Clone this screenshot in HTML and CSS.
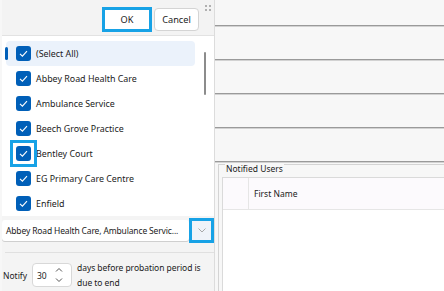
FILE: index.html
```html
<!DOCTYPE html>
<html lang="en">
<head>
  <meta charset="UTF-8">
  <title>Probation Notifications</title>
  <link rel="stylesheet" href="styles.css">
</head>
<body>
<div class="screen">
  <div class="filter-panel">
    <div class="popup-bar">
      <button class="btn btn-ok">OK</button>
      <button class="btn">Cancel</button>
      <svg class="grip" width="8" height="7" viewBox="0 0 8 7">
        <rect x="0" y="0" width="2" height="2" fill="#b0b0b0"/>
        <rect x="4" y="0" width="2" height="2" fill="#b0b0b0"/>
        <rect x="0" y="4" width="2" height="2" fill="#b0b0b0"/>
        <rect x="4" y="4" width="2" height="2" fill="#b0b0b0"/>
      </svg>
    </div>

    <div class="checklist">
      <ul class="items">
        <li class="item selected"><span class="check"><svg viewBox="0 0 15 15"><path d="M4 7.8 L6.4 10.1 L11 5.2"/></svg></span>(Select All)</li>
        <li class="item"><span class="check"><svg viewBox="0 0 15 15"><path d="M4 7.8 L6.4 10.1 L11 5.2"/></svg></span>Abbey Road Health Care</li>
        <li class="item"><span class="check"><svg viewBox="0 0 15 15"><path d="M4 7.8 L6.4 10.1 L11 5.2"/></svg></span>Ambulance Service</li>
        <li class="item"><span class="check"><svg viewBox="0 0 15 15"><path d="M4 7.8 L6.4 10.1 L11 5.2"/></svg></span>Beech Grove Practice</li>
        <li class="item"><span class="check focused"><svg viewBox="0 0 15 15"><path d="M4 7.8 L6.4 10.1 L11 5.2"/></svg></span>Bentley Court</li>
        <li class="item"><span class="check"><svg viewBox="0 0 15 15"><path d="M4 7.8 L6.4 10.1 L11 5.2"/></svg></span>EG Primary Care Centre</li>
        <li class="item"><span class="check"><svg viewBox="0 0 15 15"><path d="M4 7.8 L6.4 10.1 L11 5.2"/></svg></span>Enfield</li>
      </ul>
      <div class="scrollbar"><div class="thumb"></div></div>
    </div>

    <div class="combo">
      <span class="combo-text">Abbey Road Health Care, Ambulance Servic...</span>
      <span class="combo-btn">
        <svg width="8" height="5" viewBox="0 0 8 5"><path d="M0.5 0.5 L4 4 L7.5 0.5" fill="none" stroke="#a8a8a8" stroke-width="1"/></svg>
      </span>
    </div>

    <hr class="sep">

    <div class="notify">
      <span class="notify-label">Notify</span>
      <div class="spin">
        <span class="spin-value">30</span>
        <span class="spin-arrows">
          <svg width="8" height="16" viewBox="0 0 8 16">
            <path d="M1 4.5 L4 1.5 L7 4.5" fill="none" stroke="#555" stroke-width="1"/>
            <path d="M1 11.5 L4 14.5 L7 11.5" fill="none" stroke="#555" stroke-width="1"/>
          </svg>
        </span>
      </div>
      <span class="notify-text">days before probation period is<br>due to end</span>
    </div>
  </div>

  <div class="main">
    <div class="field first"></div>
    <div class="field"></div>
    <div class="field"></div>
    <div class="field"></div>
    <div class="field"></div>
    <div class="group">
      <div class="group-title">Notified Users</div>
      <div class="grid">
        <div class="grid-head">
          <div class="cell cell-sel"></div>
          <div class="cell">First Name</div>
        </div>
      </div>
    </div>
  </div>
</div>
</body>
</html>
```

FILE: styles.css
```css
body {
  margin: 0;
  background: #f7f7f7;
  font-family: 'Noto Sans', sans-serif;
  font-size: 8.5px;
  color: #1b1b1b;
  overflow: hidden;
}
.screen {
  display: flex;
  width: 444px;
  height: 291px;
  overflow: hidden;
}
.filter-panel {
  width: 213px;
  margin-left: 2px;
  flex-shrink: 0;
  box-sizing: border-box;
  border-right: 1px solid #dcdcdc;
  background: #f4f4f4;
}
.popup-bar {
  position: relative;
  height: 36px;
  box-sizing: border-box;
  display: flex;
  justify-content: flex-end;
  align-items: flex-start;
  padding: 7px 15px 0 0;
  border-bottom: 1px solid #e2e2e2;
  background: #f3f3f3;
}
.btn {
  font-family: inherit;
  font-size: 9.2px;
  color: #1b1b1b;
  background: #fff;
  border: 1px solid #d4d4d4;
  border-radius: 4px;
  width: 45px;
  height: 23px;
  margin: 1px 0 0 2px;
  padding: 0;
}
.btn-ok {
  width: 50px;
  height: 25px;
  margin: 0;
  border: 3px solid #17a2e6;
  border-radius: 0;
}
.grip {
  position: absolute;
  top: 5px;
  right: 1px;
}
.checklist {
  display: flex;
  height: 180px;
  background: #fff;
}
.items {
  list-style: none;
  margin: 0;
  padding: 5px 0 0 4px;
  width: 196px;
  box-sizing: border-box;
  overflow: hidden;
  font-size: 8.9px;
}
.item {
  position: relative;
  display: flex;
  align-items: center;
  gap: 5px;
  height: 25px;
  width: 189px;
  padding-left: 10px;
  box-sizing: border-box;
  border-radius: 4px;
  white-space: nowrap;
}
.item.selected {
  background: #ebf2fb;
}
.item.selected::before {
  content: "";
  position: absolute;
  left: -1px;
  top: 6px;
  width: 3px;
  height: 13px;
  border-radius: 2px;
  background: #005fb8;
}
.check {
  flex-shrink: 0;
  width: 15px;
  height: 15px;
  border-radius: 3px;
  background: #005fb8;
}
.check svg {
  display: block;
  width: 15px;
  height: 15px;
  fill: none;
  stroke: #fff;
  stroke-width: 1.1;
}
.check.focused {
  position: relative;
}
.check.focused::after {
  content: "";
  position: absolute;
  left: -6px;
  top: -6px;
  right: -6px;
  bottom: -6px;
  border: 3px solid #17a2e6;
}
.scrollbar {
  flex: 1;
  position: relative;
}
.thumb {
  position: absolute;
  left: 6px;
  top: 16px;
  width: 2px;
  height: 43px;
  border-radius: 1px;
  background: #8c8c8c;
}
.combo {
  display: flex;
  align-items: center;
  height: 25px;
  margin-top: 2px;
}
.combo-text {
  flex: 1;
  min-width: 0;
  height: 21px;
  line-height: 21px;
  padding-left: 4px;
  background: #fff;
  border-radius: 3px;
  box-shadow: 0 1px 0 #cfcfcf;
  white-space: nowrap;
  overflow: hidden;
  letter-spacing: -0.15px;
}
.combo-btn {
  flex-shrink: 0;
  width: 25px;
  height: 25px;
  box-sizing: border-box;
  border: 3px solid #17a2e6;
  background: #eff3f9;
  display: flex;
  align-items: center;
  justify-content: center;
}
.sep {
  margin: 9px 0 0 3px;
  border: none;
  border-top: 1px solid #e0e0e0;
}
.notify {
  display: flex;
  align-items: center;
  margin-top: 7px;
  padding-left: 1px;
}
.notify-label {
  width: 29px;
}
.spin {
  display: flex;
  align-items: center;
  width: 40px;
  height: 24px;
  box-sizing: border-box;
  border: 1px solid #d8d8d8;
  border-radius: 4px;
  background: #fff;
  padding-left: 4px;
}
.spin-value {
  flex: 1;
}
.spin-arrows {
  display: flex;
  margin-right: 8px;
}
.notify-text {
  margin-left: 5px;
  line-height: 15px;
  letter-spacing: -0.05px;
}
.main {
  flex: 1;
}
.field {
  height: 32px;
  border-bottom: 1px solid #9a9a9a;
  box-shadow: 0 1px 0 #d2d2d2;
  margin-bottom: 1px;
}
.field.first {
  height: 25px;
}
.group {
  margin: 2px 0 0 3px;
  border-left: 1px solid #d4d4d4;
  border-top: 1px solid #d4d4d4;
  height: 140px;
}
.group-title {
  display: inline-block;
  height: 13px;
  line-height: 10px;
  margin: -1px 0 0 6px;
  padding: 0 1px;
  background: #f7f7f7;
  white-space: nowrap;
  vertical-align: top;
}
.grid {
  margin-left: 3px;
  background: #fff;
  border-left: 1px solid #dadada;
  border-top: 1px solid #dadada;
  height: 120px;
}
.grid-head {
  display: flex;
  height: 31px;
  background: #fcfafd;
  border-bottom: 1px solid #e6e6e6;
}
.cell {
  display: flex;
  align-items: center;
  padding-left: 5px;
}
.cell-sel {
  width: 25px;
  padding: 0;
  border-right: 1px solid #e6e6e6;
}
```
